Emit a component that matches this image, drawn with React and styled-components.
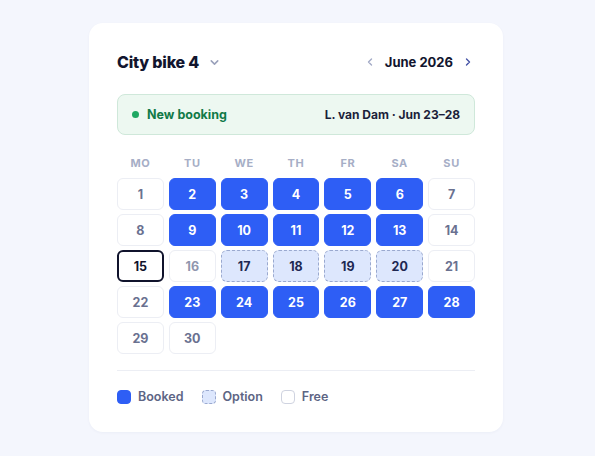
import React from 'react';
import styled, { createGlobalStyle } from 'styled-components';

const Global = createGlobalStyle`
  html, body {
    margin: 0;
    padding: 0;
    background: #f4f6fd;
    font-family: Inter, "Noto Sans", sans-serif;
  }
`;

const Page = styled.div`
  width: 595px;
  height: 456px;
  padding-top: 23px;
  box-sizing: border-box;
  display: flex;
  justify-content: center;
  padding-right: 3px;
`;

const Card = styled.div`
  width: 414px;
  height: 409px;
  box-sizing: border-box;
  background: #fff;
  border-radius: 14px;
  box-shadow: 0 1px 3px rgba(30, 40, 90, 0.04);
  padding: 28px 28px 0 28px;
  display: flex;
  flex-direction: column;
`;

const Header = styled.div`
  display: flex;
  align-items: center;
  justify-content: space-between;
  height: 22px;
`;

const Title = styled.div`
  display: flex;
  align-items: center;
  gap: 9px;
  font-size: 16px;
  font-weight: 800;
  color: #12152e;
  letter-spacing: -0.2px;
`;

const MonthNav = styled.div`
  display: flex;
  align-items: center;
  gap: 9px;
  font-size: 13px;
  font-weight: 700;
  color: #12152e;
  margin-right: 1px;
`;

const Banner = styled.div`
  margin-top: 21px;
  height: 41px;
  box-sizing: border-box;
  border: 1px solid #cfe8da;
  background: #edf8f1;
  border-radius: 8px;
  display: flex;
  align-items: center;
  justify-content: space-between;
  padding: 0 14px 0 14px;
  font-size: 12px;
  font-weight: 700;
`;

const Status = styled.div`
  display: flex;
  align-items: center;
  gap: 8px;
  color: #117a48;
  font-size: 12.5px;
`;

const Dot = styled.span`
  width: 7px;
  height: 7px;
  border-radius: 50%;
  background: #1fa863;
`;

const Who = styled.div`
  color: #1b1f3a;
`;

const Grid = styled.div`
  display: grid;
  grid-template-columns: repeat(7, 1fr);
  column-gap: 5px;
  row-gap: 4px;
`;

const Weekdays = styled(Grid)`
  margin-top: 21px;
  margin-bottom: 8px;
`;

const Weekday = styled.div`
  text-align: center;
  font-size: 11px;
  font-weight: 700;
  color: #a6aec6;
  letter-spacing: 0.6px;
`;

const cellStyles = {
  booked: 'background: #2e5ef5; color: #fff; border: 1px solid #2e5ef5;',
  option: 'background: #dde7fd; color: #1e2852; border: 1px dashed #9aa9cf;',
  free: 'background: #fff; color: #6a7190; border: 1px solid #eceef4;',
  muted: 'background: #fff; color: #9096ae; border: 1px solid #eceef4;',
  today: 'background: #fff; color: #10132c; border: 2px solid #10132c;',
  swatch: 'background: #fff; border: 1px solid #cfd3e0;',
};

const Cell = styled.div`
  height: 32px;
  box-sizing: border-box;
  border-radius: 6px;
  display: flex;
  align-items: center;
  justify-content: center;
  font-size: 12.5px;
  font-weight: 700;
  ${({ $kind }) => cellStyles[$kind]}
`;

const Divider = styled.div`
  margin-top: 16px;
  height: 1px;
  background: #eceef4;
`;

const Legend = styled.div`
  display: flex;
  align-items: center;
  gap: 18px;
  margin-top: 18px;
`;

const LegendItem = styled.div`
  display: flex;
  align-items: center;
  gap: 7px;
  font-size: 12.5px;
  font-weight: 600;
  color: #5d6584;
`;

const Swatch = styled.span`
  width: 14px;
  height: 14px;
  border-radius: 4px;
  box-sizing: border-box;
  ${({ $kind }) => cellStyles[$kind]}
`;

const Chevron = ({ dir, color, size = 12 }) => {
  const d = {
    down: 'M3 4.5 L6 7.5 L9 4.5',
    left: 'M7.5 3 L4.5 6 L7.5 9',
    right: 'M4.5 3 L7.5 6 L4.5 9',
  }[dir];
  return (
    <svg width={size} height={size} viewBox="0 0 12 12" fill="none">
      <path d={d} stroke={color} strokeWidth="1.4" strokeLinecap="round" strokeLinejoin="round" />
    </svg>
  );
};

const booked = [2, 3, 4, 5, 6, 9, 10, 11, 12, 13, 23, 24, 25, 26, 27, 28];
const option = [17, 18, 19, 20];

const kindOf = (d) => {
  if (d === 15) return 'today';
  if (d === 16) return 'muted';
  if (booked.includes(d)) return 'booked';
  if (option.includes(d)) return 'option';
  return 'free';
};

const days = Array.from({ length: 30 }, (_, i) => i + 1);

export default function App() {
  return (
    <>
      <Global />
      <Page>
        <Card>
          <Header>
            <Title>
              City bike 4
              <Chevron dir="down" color="#9aa1bb" size={13} />
            </Title>
            <MonthNav>
              <Chevron dir="left" color="#a3aac6" />
              June 2026
              <Chevron dir="right" color="#4553a6" />
            </MonthNav>
          </Header>
          <Banner>
            <Status>
              <Dot />
              New booking
            </Status>
            <Who>L. van Dam · Jun 23–28</Who>
          </Banner>
          <Weekdays>
            {['MO', 'TU', 'WE', 'TH', 'FR', 'SA', 'SU'].map((w) => (
              <Weekday key={w}>{w}</Weekday>
            ))}
          </Weekdays>
          <Grid>
            {days.map((d) => (
              <Cell key={d} $kind={kindOf(d)}>{d}</Cell>
            ))}
          </Grid>
          <Divider />
          <Legend>
            <LegendItem><Swatch $kind="booked" />Booked</LegendItem>
            <LegendItem><Swatch $kind="option" />Option</LegendItem>
            <LegendItem><Swatch $kind="swatch" />Free</LegendItem>
          </Legend>
        </Card>
      </Page>
    </>
  );
}
